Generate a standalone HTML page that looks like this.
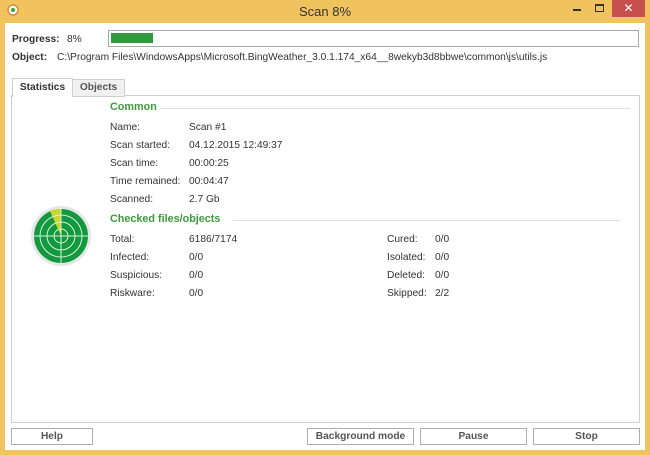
<!DOCTYPE html><html><head><style>
body{margin:0;width:650px;height:455px;background:#f0c35e;font-family:"Liberation Sans",sans-serif;font-size:10.2px;color:#333;position:relative;overflow:hidden}
.a{position:absolute;white-space:nowrap}
.in{position:absolute;left:5px;top:23px;width:640px;height:427px;background:#fff}
.btn{position:absolute;top:428px;height:15px;border:1px solid #adadad;background:#fff;text-align:center;line-height:15px;font-weight:bold;color:#555;font-size:10.2px}
.g{color:#3d9a3d;font-weight:bold;font-size:10.8px}
.hr{position:absolute;height:1px;background:#e0e0e0}
</style></head><body>
<div class="a" style="left:0;top:4px;width:650px;text-align:center;font-size:13px;color:#333">Scan 8%</div>
<svg class="a" style="left:7px;top:4px" width="12" height="12"><circle cx="6" cy="6" r="5" fill="#fff" stroke="#d84" stroke-width="1.5"/><circle cx="6" cy="6" r="2" fill="#3a3"/></svg>
<div class="a" style="left:573px;top:9px;width:8px;height:2px;background:#333"></div>
<div class="a" style="left:595px;top:4px;width:7px;height:5px;border:1px solid #333;border-top-width:2px"></div>
<div class="a" style="left:612px;top:0;width:33px;height:17px;background:#c7504f;color:#fff;text-align:center;line-height:16px;font-size:12px">✕</div>
<div class="in"></div>
<div class="a" style="left:12px;top:34px;font-weight:bold">Progress:</div>
<div class="a" style="left:67px;top:34px">8%</div>
<div class="a" style="left:108px;top:30px;width:529px;height:15px;border:1px solid #aaa;background:#fff"></div>
<div class="a" style="left:111px;top:33px;width:42px;height:10px;background:#2e9a3c"></div>
<div class="a" style="left:12px;top:52px;font-weight:bold">Object:</div>
<div class="a" style="left:57px;top:52px">C:\Program Files\WindowsApps\Microsoft.BingWeather_3.0.1.174_x64__8wekyb3d8bbwe\common\js\utils.js</div>
<div class="a" style="left:11px;top:95px;width:627px;height:326px;border:1px solid #cfcfcf"></div>
<div class="a" style="left:12px;top:78px;width:59px;height:18px;border:1px solid #cfcfcf;border-bottom:none;background:#fff;font-weight:bold;text-align:center;line-height:17px">Statistics</div>
<div class="a" style="left:72px;top:79px;width:51px;height:16px;border:1px solid #cfcfcf;background:#f0f0f0;font-weight:bold;text-align:center;line-height:16px;color:#555">Objects</div>
<div class="a g" style="left:110px;top:101px">Common</div><div class="hr" style="left:160px;top:108px;width:470px"></div>
<div class="a" style="left:110px;top:122px">Name:</div><div class="a" style="left:189px;top:122px">Scan #1</div>
<div class="a" style="left:110px;top:140px">Scan started:</div><div class="a" style="left:189px;top:140px">04.12.2015 12:49:37</div>
<div class="a" style="left:110px;top:158px">Scan time:</div><div class="a" style="left:189px;top:158px">00:00:25</div>
<div class="a" style="left:110px;top:176px">Time remained:</div><div class="a" style="left:189px;top:176px">00:04:47</div>
<div class="a" style="left:110px;top:194px">Scanned:</div><div class="a" style="left:189px;top:194px">2.7 Gb</div>
<div class="a g" style="left:110px;top:213px">Checked files/objects</div><div class="hr" style="left:233px;top:220px;width:387px"></div>
<div class="a" style="left:110px;top:234px">Total:</div><div class="a" style="left:189px;top:234px">6186/7174</div>
<div class="a" style="left:110px;top:252px">Infected:</div><div class="a" style="left:189px;top:252px">0/0</div>
<div class="a" style="left:110px;top:270px">Suspicious:</div><div class="a" style="left:189px;top:270px">0/0</div>
<div class="a" style="left:110px;top:288px">Riskware:</div><div class="a" style="left:189px;top:288px">0/0</div>
<div class="a" style="left:387px;top:234px">Cured:</div><div class="a" style="left:435px;top:234px">0/0</div>
<div class="a" style="left:387px;top:252px">Isolated:</div><div class="a" style="left:435px;top:252px">0/0</div>
<div class="a" style="left:387px;top:270px">Deleted:</div><div class="a" style="left:435px;top:270px">0/0</div>
<div class="a" style="left:387px;top:288px">Skipped:</div><div class="a" style="left:435px;top:288px">2/2</div>
<svg class="a" style="left:30px;top:205px" width="62" height="62" viewBox="0 0 62 62">
<circle cx="31" cy="31" r="30" fill="#e6e6e6"/><circle cx="31" cy="31" r="27" fill="#12993f"/>
<path d="M31 31 L20 6 A27 27 0 0 1 31 4 Z" fill="#c8d82a"/>
<g stroke="#d8f0d8" stroke-width="1" fill="none"><circle cx="31" cy="31" r="21"/><circle cx="31" cy="31" r="14"/><circle cx="31" cy="31" r="7"/><path d="M31 4V58M4 31H58"/></g></svg>
<div class="btn" style="left:11px;width:80px">Help</div>
<div class="btn" style="left:307px;width:105px">Background mode</div>
<div class="btn" style="left:420px;width:105px">Pause</div>
<div class="btn" style="left:533px;width:105px">Stop</div>
</body></html>
